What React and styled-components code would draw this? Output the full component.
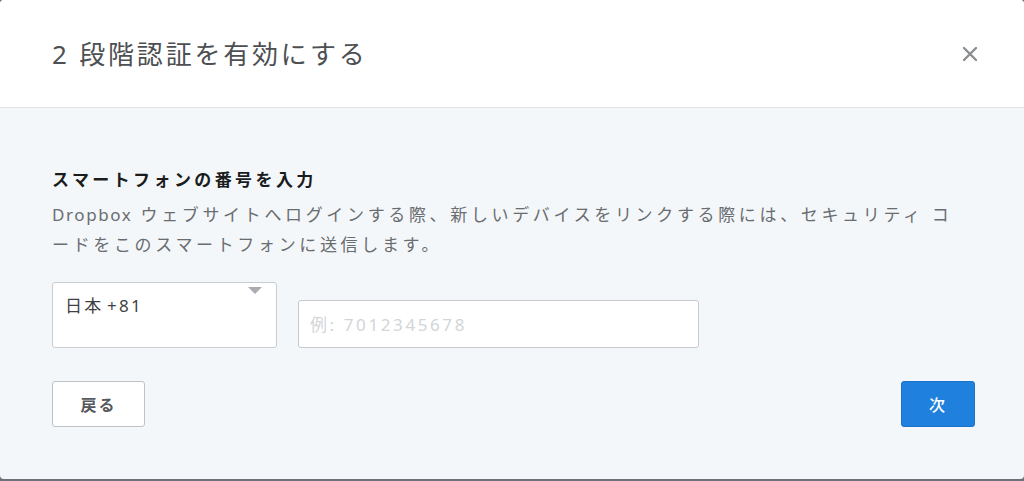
import React, { useState } from 'react';
import styled, { createGlobalStyle } from 'styled-components';

const GlobalStyle = createGlobalStyle`
  html, body {
    margin: 0;
    padding: 0;
    background: #6d7278;
    height: 481px;
    overflow: hidden;
  }
  * { box-sizing: border-box; }
`;

const font = `"Noto Sans", "Noto Sans CJK JP", sans-serif`;

const Modal = styled.div`
  display: flex;
  flex-direction: column;
  height: 479px;
  background: #f4f7fa;
  border-radius: 4px;
  overflow: hidden;
  font-family: ${font};
`;

const Header = styled.div`
  height: 108px;
  flex-shrink: 0;
  display: flex;
  align-items: center;
  justify-content: space-between;
  padding: 0 44px 0 52px;
  background: #fff;
  border-bottom: 1px solid #e1e4e7;
`;

const Title = styled.h1`
  margin: 0 0 1px;
  font-size: 26px;
  font-weight: 400;
  letter-spacing: 2.8px;
  color: #4d4f52;
`;

const Close = styled.button`
  border: none;
  background: none;
  padding: 0;
  width: 20px;
  height: 20px;
  display: flex;
  align-items: center;
  justify-content: center;
  cursor: pointer;
`;

const Body = styled.div`
  flex: 1;
  display: flex;
  flex-direction: column;
  padding: 59px 49px 0 52px;
`;

const Heading = styled.h2`
  margin: 0;
  font-size: 17px;
  line-height: 26px;
  font-weight: 700;
  letter-spacing: 3.4px;
  color: #1b1c1d;
`;

const Text = styled.p`
  margin: 7px 0 0;
  font-size: 17px;
  line-height: 30px;
  letter-spacing: 3.65px;
  color: #6a6d70;
  white-space: nowrap;
`;

const Latin = styled.span`
  letter-spacing: 1.6px;
`;

const FormRow = styled.div`
  display: flex;
  align-items: flex-end;
  gap: 21px;
  margin-top: 22px;
`;

const Select = styled.div`
  position: relative;
  width: 225px;
  height: 66px;
  background: #fff;
  border: 1px solid #c9ccd0;
  border-radius: 3px;
  padding: 8px 12px;
  font-size: 17px;
  line-height: 30px;
  letter-spacing: 2.2px;
  color: #3f4144;
`;

const Dial = styled.span`
  margin-left: -3px;
`;

const Caret = styled.span`
  position: absolute;
  top: 4px;
  right: 14px;
  width: 0;
  height: 0;
  border-left: 7px solid transparent;
  border-right: 7px solid transparent;
  border-top: 7px solid #a9adb2;
`;

const Input = styled.input`
  width: 401px;
  height: 48px;
  background: #fff;
  border: 1px solid #c6c9cd;
  border-radius: 3px;
  padding: 0 11px;
  font-family: ${font};
  font-size: 17px;
  letter-spacing: 2.6px;
  color: #333;
  caret-color: #222;
  outline: none;

  &::placeholder {
    color: #d3d5d8;
  }
`;

const Actions = styled.div`
  display: flex;
  justify-content: space-between;
  margin-top: 33px;
`;

const Button = styled.button`
  height: 46px;
  width: ${({ primary }) => (primary ? '74px' : '93px')};
  padding: 0;
  border-radius: 3px;
  font-family: ${font};
  font-size: 16px;
  font-weight: ${({ primary }) => (primary ? 500 : 700)};
  letter-spacing: 2px;
  cursor: pointer;
  background: ${({ primary }) => (primary ? '#1f80dd' : '#fff')};
  color: ${({ primary }) => (primary ? '#fff' : '#55585c')};
  border: 1px solid ${({ primary }) => (primary ? '#1a72c9' : '#bfc2c6')};
`;

const CloseIcon = () => (
  <svg width="16" height="16" viewBox="0 0 16 16">
    <path d="M2 2 L14 14 M14 2 L2 14" stroke="#8b8d90" strokeWidth="2.4" strokeLinecap="round" />
  </svg>
);

const App = () => {
  const [phone, setPhone] = useState('');

  return (
    <>
      <GlobalStyle />
      <Modal>
        <Header>
          <Title>2 段階認証を有効にする</Title>
          <Close aria-label="閉じる"><CloseIcon /></Close>
        </Header>
        <Body>
          <Heading>スマートフォンの番号を入力</Heading>
          <Text>
            <Latin>Dropbox</Latin> ウェブサイトへログインする際、新しいデバイスをリンクする際には、セキュリティ コ
            <br />
            ードをこのスマートフォンに送信します。
          </Text>
          <FormRow>
            <Select>
              日本 <Dial>+81</Dial>
              <Caret />
            </Select>
            <Input
              autoFocus
              value={phone}
              onChange={e => setPhone(e.target.value)}
              placeholder="例: 7012345678"
            />
          </FormRow>
          <Actions>
            <Button>戻る</Button>
            <Button primary>次</Button>
          </Actions>
        </Body>
      </Modal>
    </>
  );
};

export default App;
